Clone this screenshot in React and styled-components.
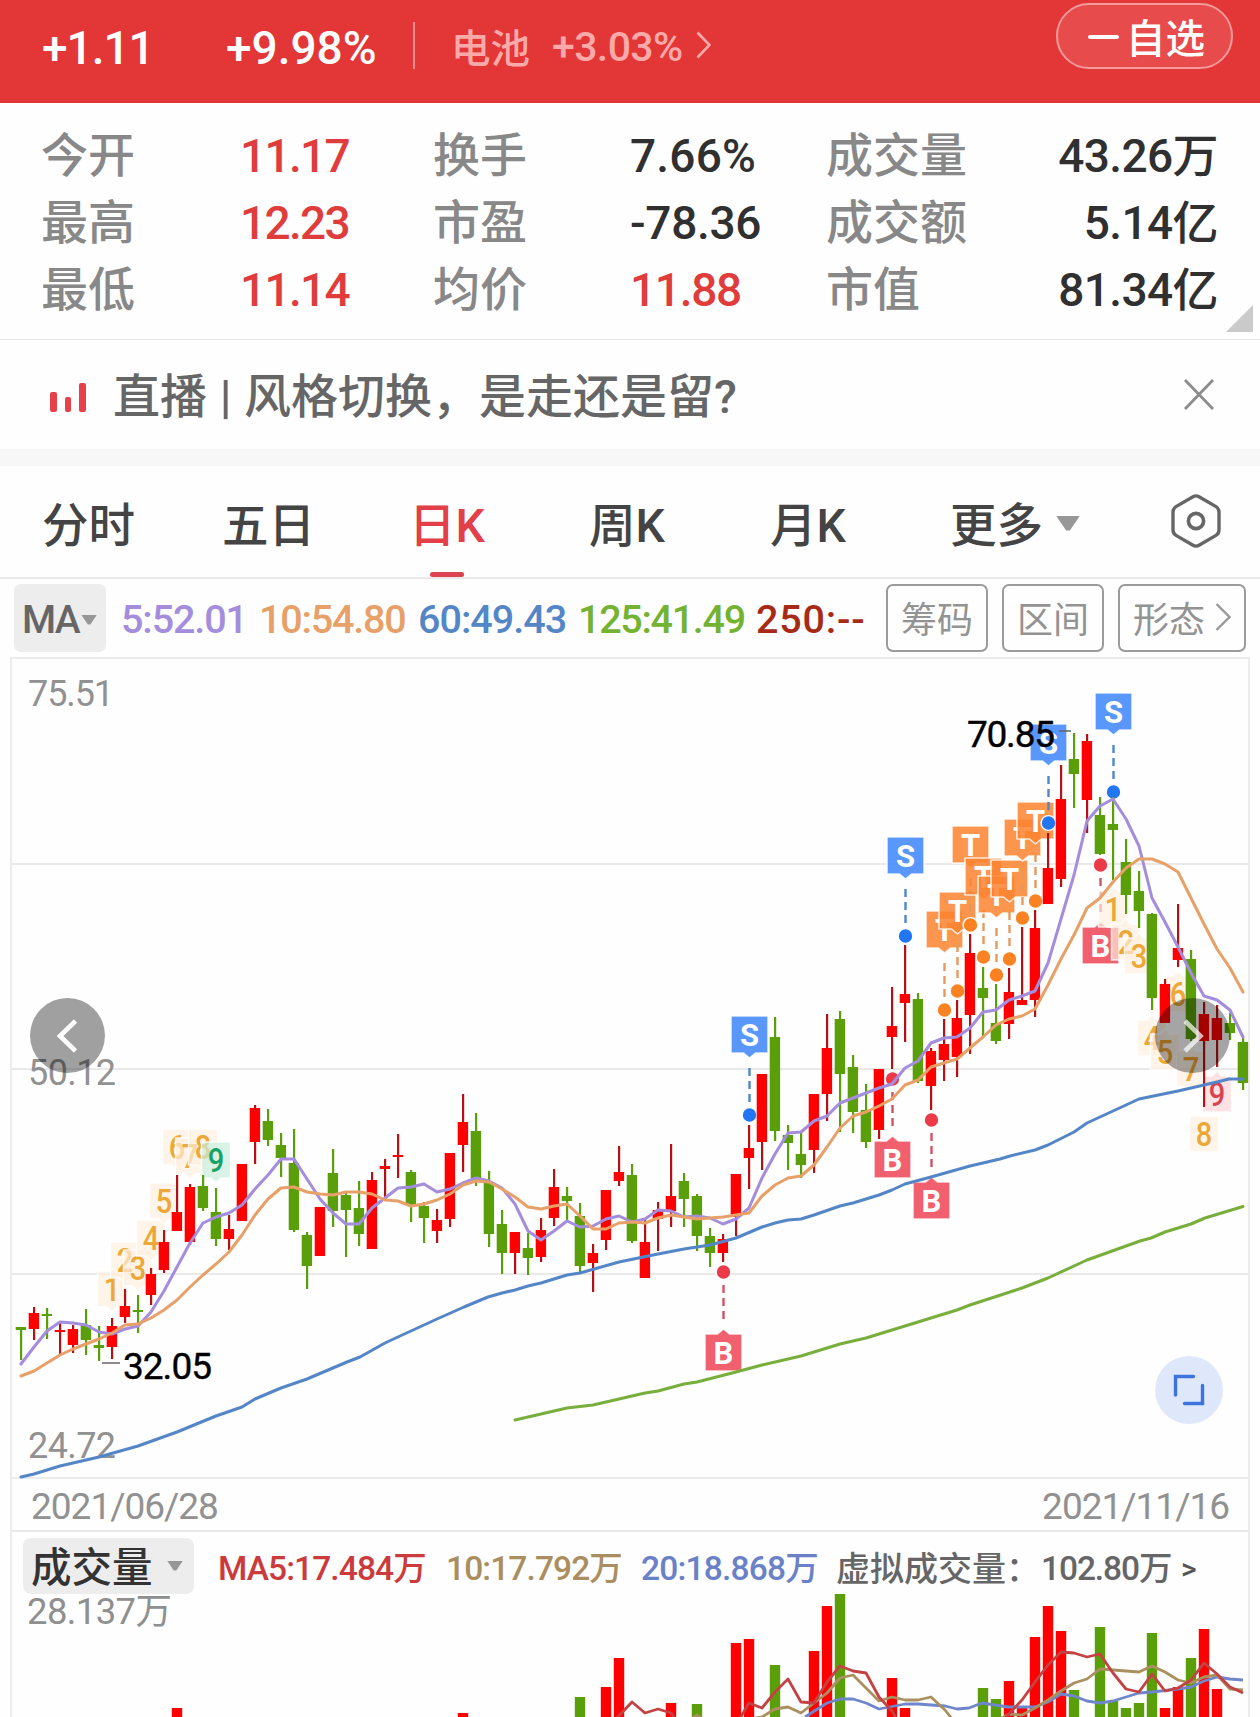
import React from "react";
import styled, { createGlobalStyle } from "styled-components";

const GlobalStyle = createGlobalStyle`
  *, *::before, *::after { box-sizing: border-box; }
  body {
    margin: 0;
    background: #fefefe;
    font-family: Roboto, "Noto Sans CJK SC", sans-serif;
    font-weight: 500;
    overflow: hidden;
  }
`;

const Page = styled.div`
  width: 1260px;
  height: 1717px;
  overflow: hidden;
  display: flex;
  flex-direction: column;
`;

/* ---------- header ---------- */

const Header = styled.header`
  flex: none;
  height: 103px;
  background: #e33637;
  display: flex;
  align-items: flex-start;
  padding: 3px 27px 0 42px;
`;

const Change = styled.span`
  width: ${(p) => p.$width}px;
  height: 90px;
  line-height: 90px;
  font-size: 46px;
  letter-spacing: ${(p) => p.$spacing || 0}px;
  color: #fff;
  white-space: nowrap;
`;

const Divider = styled.span`
  width: 2px;
  height: 47px;
  margin-top: 19px;
  background: #f08b8b;
`;

const Sector = styled.div`
  display: flex;
  align-items: center;
  height: 84px;
  padding-left: 36px;
  color: #fba9a9;
  white-space: nowrap;
`;

const SectorName = styled.span`
  width: 101px;
  font-size: 39.5px;
`;

const SectorChange = styled.span`
  width: 144px;
  padding-top: 4px;
  font-size: 41px;
  letter-spacing: -0.6px;
`;

const WatchButton = styled.button`
  margin-left: auto;
  width: 177px;
  height: 66px;
  padding: 0 0 2px 30px;
  border: 2px solid #f39a9a;
  border-radius: 33px;
  background: #e74b4c;
  display: flex;
  align-items: center;
  gap: 7px;
  color: #fff;
  font: 500 39.5px Roboto, "Noto Sans CJK SC", sans-serif;
`;

const Minus = styled.span`
  width: 31px;
  height: 4px;
  margin-top: 3px;
  border-radius: 2px;
  background: #fff;
`;

/* ---------- quote stats ---------- */

const Stats = styled.section`
  position: relative;
  flex: none;
  height: 237px;
  padding: 19px 42px 0 41px;
  border-bottom: 1px solid #e6e6e6;
  display: grid;
  grid-template-columns: 199px 193px 197px 196px 141px 1fr;
  grid-auto-rows: 67px;
`;

const StatLabel = styled.span`
  line-height: 67px;
  font-size: 47px;
  color: #888;
  white-space: nowrap;
`;

const StatValue = styled.span`
  line-height: 69px;
  font-size: 46px;
  letter-spacing: ${(p) => p.$spacing}px;
  color: ${(p) => (p.$up ? "#e03c3c" : "#303030")};
  text-align: ${(p) => (p.$right ? "right" : "left")};
  white-space: nowrap;
`;

const Corner = styled.span`
  position: absolute;
  right: 7px;
  bottom: 7px;
  width: 27px;
  height: 27px;
  background: #cacaca;
  clip-path: polygon(100% 0, 100% 100%, 0 100%);
`;

/* ---------- news ---------- */

const News = styled.section`
  flex: none;
  height: 109px;
  padding: 0 46px 0 50px;
  display: flex;
  align-items: center;
`;

const NewsBars = styled.span`
  width: 63px;
  height: 29px;
  display: flex;
  align-items: flex-end;
  gap: 8px;
  margin-top: 6px;
`;

const NewsBar = styled.span`
  width: 6.5px;
  height: ${(p) => p.$height}px;
  border-radius: 2px;
  background: #e6404a;
`;

const NewsTitle = styled.span`
  flex: 1;
  font-size: 47px;
  word-spacing: 1px;
  color: #666;
  line-height: 114px;
  height: 109px;
  white-space: nowrap;
`;

const Band = styled.div`
  flex: none;
  height: 17px;
  background: #f7f7f7;
`;

/* ---------- tabs ---------- */

const Tabs = styled.nav`
  flex: none;
  height: 113px;
  padding-left: 42px;
  border-bottom: 2px solid #e8e8e8;
  display: grid;
  grid-template-columns: 180px 187px 180px 181px 180px 221px 50px;
`;

const Tab = styled.span`
  display: flex;
  align-items: center;
  gap: 13px;
  height: 110px;
  position: relative;
  font-size: 46.5px;
  color: ${(p) => (p.$active ? "#e23f48" : "#444")};
  white-space: nowrap;
`;

const Underline = styled.span`
  position: absolute;
  left: 21px;
  bottom: -1px;
  width: 34px;
  height: 5px;
  border-radius: 3px;
  background: #dc434f;
`;

const Caret = styled.span`
  flex: none;
  width: ${(p) => p.$w}px;
  height: ${(p) => p.$h}px;
  margin-top: ${(p) => p.$drop || 0}px;
  background: #979797;
  clip-path: polygon(0 0, 100% 0, 58% 100%, 42% 100%);
`;

/* ---------- moving average row ---------- */

const MaRow = styled.section`
  flex: none;
  height: 78px;
  padding: 0 14px 0 14px;
  display: flex;
  align-items: center;
`;

const MaPicker = styled.span`
  width: 92px;
  height: 68px;
  margin-right: 15px;
  padding: 3px 0 0 8px;
  display: flex;
  align-items: center;
  gap: 2px;
  border-radius: 7px;
  background: #ededed;
  font-size: 39px;
  letter-spacing: -1.6px;
  color: #666;
`;

const MaValue = styled.span`
  width: ${(p) => p.$width}px;
  padding-top: 2px;
  font-size: 39.5px;
  letter-spacing: ${(p) => p.$spacing}px;
  color: ${(p) => p.$color};
  white-space: nowrap;
`;

const ToolButton = styled.button`
  width: ${(p) => p.$width || 102}px;
  height: 68px;
  margin-left: ${(p) => (p.$first ? "auto" : "14px")};
  padding: 0 0 3px;
  display: flex;
  align-items: center;
  justify-content: center;
  gap: 10px;
  border: 2px solid #9b9b9b;
  border-radius: 7px;
  background: transparent;
  color: #939393;
  font: 400 36px Roboto, "Noto Sans CJK SC", sans-serif;
  white-space: nowrap;
`;

/* ---------- charts ---------- */

const Frame = styled.main`
  position: relative;
  flex: none;
  width: 1240px;
  height: 1060px;
  margin-left: 10px;
  border: 2px solid #ececec;
  border-bottom: 0;
`;

const Plot = styled.svg`
  display: block;
  overflow: visible;
  width: 1236px;
  height: ${(p) => p.$height}px;
`;

const RoundButton = styled.button`
  position: absolute;
  left: ${(p) => p.$left}px;
  top: ${(p) => p.$top}px;
  width: ${(p) => p.$size}px;
  height: ${(p) => p.$size}px;
  padding: 0;
  border: 0;
  border-radius: 50%;
  background: ${(p) => p.$bg};
`;

const DateRow = styled.div`
  height: 55px;
  padding: 3px 19px 0 19px;
  border-top: 2px solid #ececec;
  border-bottom: 2px solid #e8e8e8;
  display: flex;
  align-items: center;
  justify-content: space-between;
  font-size: 37px;
  font-weight: 400;
  letter-spacing: -1px;
  color: #919191;
`;

const VolumeHead = styled.div`
  height: 62px;
  padding: 6px 0 0 11px;
  display: flex;
`;

const VolumePicker = styled.span`
  width: 171px;
  height: 56px;
  margin-right: 24px;
  padding: 0 11px 3px 8px;
  display: flex;
  align-items: center;
  justify-content: space-between;
  border-radius: 8px;
  background: #ededed;
  font-size: 40.5px;
  color: #333;
  white-space: nowrap;
`;

const VolumeText = styled.span`
  width: ${(p) => p.$width}px;
  padding-top: 2px;
  line-height: 58px;
  font-size: ${(p) => p.$size || 33.5}px;
  letter-spacing: ${(p) => p.$spacing || 0}px;
  color: ${(p) => p.$color};
  white-space: nowrap;
`;

const RED = "#fe0000";
const GREEN = "#5a9f0a";
const xAt = (i) => 21 + i * 13;

// [direction, high, body top, body bottom, low]
const candles = [
  ["g",1327,1327,1330,1360],["r",1307,1313,1329,1340],["g",1308,1314,1316,1339],["r",1323,1330,1332,1354],
  ["r",1325,1329,1345,1353],["g",1309,1325,1340,1355],["g",1326,1345,1348,1361],["r",1318,1326,1347,1359],
  ["r",1289,1306,1317,1323],["g",1295,1310,1312,1333],["r",1268,1274,1295,1305],["r",1230,1242,1270,1273],
  ["r",1175,1212,1231,1231],["r",1184,1187,1242,1245],["g",1175,1186,1208,1211],["g",1188,1212,1239,1246],
  ["r",1215,1229,1239,1250],["r",1164,1164,1221,1221],["r",1105,1108,1142,1164],["g",1109,1121,1140,1146],
  ["g",1133,1145,1158,1177],["g",1129,1163,1230,1232],["g",1232,1235,1266,1289],["r",1207,1207,1256,1256],
  ["g",1149,1173,1211,1227],["g",1193,1195,1210,1257],["g",1181,1208,1234,1246],["r",1172,1180,1249,1249],
  ["r",1159,1166,1169,1197],["r",1134,1155,1157,1178],["g",1170,1172,1205,1222],["g",1202,1206,1218,1243],
  ["r",1209,1220,1231,1243],["r",1153,1153,1219,1227],["r",1094,1122,1145,1172],["g",1113,1131,1178,1186],
  ["g",1171,1182,1234,1247],["g",1210,1224,1253,1274],["r",1232,1232,1253,1274],["g",1233,1248,1258,1275],
  ["r",1218,1230,1257,1262],["r",1169,1187,1218,1226],["g",1187,1196,1201,1222],["g",1203,1216,1266,1272],
  ["r",1244,1253,1263,1292],["r",1190,1190,1240,1250],["r",1146,1172,1181,1186],["g",1164,1175,1241,1243],
  ["r",1220,1242,1278,1278],["r",1202,1210,1219,1251],["r",1144,1196,1211,1227],["g",1173,1181,1199,1227],
  ["g",1194,1196,1236,1251],["g",1228,1236,1253,1267],["r",1234,1239,1253,1262],["r",1174,1174,1217,1236],
  ["r",1125,1148,1158,1189],["r",1074,1074,1142,1170],["g",1017,1037,1131,1141],["g",1125,1135,1143,1170],
  ["g",1133,1154,1165,1178],["r",1094,1094,1150,1173],["r",1014,1048,1094,1121],["g",1011,1019,1074,1132],
  ["g",1055,1067,1112,1133],["g",1084,1110,1142,1148],["r",1069,1069,1130,1139],["r",987,1026,1037,1069],
  ["r",945,994,1003,1042],["g",993,999,1081,1083],["r",1048,1051,1086,1110],["r",1019,1044,1060,1081],
  ["r",1000,1018,1057,1077],["r",934,953,1015,1054],["g",967,988,998,1037],["g",984,1023,1041,1044],
  ["r",968,992,1024,1039],["r",927,1000,1005,1005],["r",910,928,1000,1017],["r",833,868,904,904],
  ["r",765,799,879,887],["g",733,759,774,808],["r",734,741,800,833],["g",797,815,854,855],
  ["g",797,824,830,880],["g",839,862,895,914],["g",871,891,911,928],["g",913,914,998,1010],
  ["r",979,984,1023,1023],["r",904,948,960,967],["g",950,959,1039,1041],["r",1002,1014,1041,1107],
  ["r",1005,1018,1040,1067],["g",1013,1023,1033,1040],["g",1038,1042,1083,1090],
];

const ma5 = [
  1364,1347,1331,1322,1323,1325,1332,1334,1329,1326,1312,1291,1267,1243,1223,1217,1213,1205,1189,1175,
  1159,1159,1179,1199,1213,1224,1224,1208,1198,1188,1187,1184,1192,1189,1183,1178,1181,1188,1204,1231,
  1240,1231,1221,1227,1226,1219,1216,1222,1219,1210,1211,1217,1216,1218,1224,1219,1208,1178,1154,1133,
  1132,1121,1116,1103,1098,1093,1088,1084,1068,1061,1043,1038,1037,1028,1012,1010,1000,996,991,963,
  919,875,821,806,799,819,846,898,922,947,973,996,1000,1010,1037,
];

const ma10 = [
  1376,1371,1363,1355,1349,1344,1339,1333,1325,1324,1318,1310,1300,1287,1275,1264,1252,1235,1215,1199,
  1188,1187,1192,1194,1195,1192,1192,1194,1200,1201,1206,1204,1200,1194,1185,1181,1182,1189,1197,1207,
  1209,1206,1204,1216,1229,1229,1223,1222,1223,1218,1215,1217,1219,1218,1217,1215,1213,1196,1185,1178,
  1176,1165,1147,1128,1116,1112,1106,1099,1085,1080,1067,1063,1059,1048,1037,1025,1019,1016,1009,985,
  959,935,908,898,882,868,859,859,864,872,898,924,949,968,992,
];

const ma60 =
  "21,1477 34,1474 47,1470 60,1466 99,1457 138,1446 177,1432 216,1416 242,1407 255,1399 281,1388 307,1379 347,1362 360,1357 385,1343 400,1336 424,1325 437,1319 464,1307 488,1297 502,1293 515,1290 528,1286 541,1283 567,1275 580,1273 619,1262 658,1254 684,1249 710,1245 736,1238 762,1227 775,1223 788,1220 801,1219 814,1215 840,1206 853,1203 879,1195 892,1190 905,1184 931,1177 970,1166 1000,1159 1010,1156 1035,1150 1048,1145 1074,1132 1087,1123 1113,1111 1139,1099 1178,1091 1217,1082 1229,1079 1243,1079";

const ma125 =
  "515,1420 528,1417 541,1414 567,1408 593,1405 645,1393 658,1391 684,1384 697,1382 736,1372 762,1365 801,1356 840,1344 866,1338 957,1310 970,1305 1022,1288 1048,1278 1087,1260 1140,1241 1151,1238 1165,1232 1191,1224 1205,1218 1243,1206.5";

const toPoints = (values) => values.map((y, i) => `${xAt(i)},${y}`).join(" ");

const kinds = {
  S: { fill: "#3e86fb", dot: "#2176f3", line: "#4f87c9" },
  T: { fill: "#fb8330", dot: "#fa8223", line: "#e59a5d" },
  B: { fill: "#ef4656", dot: "#ec3b48", line: "#cf5361" },
};

const markers = [
  ["B", 54, 1272],["S", 56, 1115],["B", 67, 1079],["S", 68, 936],["B", 70, 1120],
  ["T", 71, 1010],["T", 72, 991],["T", 73, 925],["T", 74, 957],["T", 75, 975],
  ["T", 76, 959],["T", 77, 918],["T", 78, 901],["S", 79, 823],["B", 83, 865],["S", 84, 792],
];

function Marker({ kind, index, y }) {
  const c = kinds[kind];
  const x = xAt(index) + 0.5;
  const dir = kind === "B" ? 1 : -1;
  const near = y + dir * 62;
  const far = y + dir * 99;
  return (
    <g>
      <path d={`M${x} ${y + dir * 13}V${y + dir * 51}`} stroke={c.line} strokeWidth="2.4" strokeDasharray="8 5" />
      <path
        d={`M${x - 18.5} ${near}H${x - 6}L${x} ${near - dir * 5}L${x + 6} ${near}H${x + 18.5}V${far}H${x - 18.5}Z`}
        fill={c.fill}
        fillOpacity="0.86"
        stroke="#fff"
        strokeOpacity="0.8"
        strokeWidth="1.6"
        strokeLinejoin="round"
      />
      <text x={x} y={(near + far) / 2 + 11} textAnchor="middle" fontSize="31" fontWeight="700" fill="#fff">
        {kind}
      </text>
      <circle cx={x} cy={y} r="7.4" fill={c.dot} stroke="#fff" strokeWidth="1.4" />
    </g>
  );
}

// [digit, candle index, centre y, pointer direction, tone]
const counts = [
  ["1", 7, 1289, 1],["2", 8, 1260, 1],["3", 9, 1268, 1],["4", 10, 1238, 1],["5", 11, 1201, 1],
  ["6", 12, 1147, 1],["7", 13, 1156, 1],["8", 14, 1147, 1],["9", 15, 1160, 1, "green"],
  ["1", 84, 909, -1],["2", 85, 942, -1],["3", 86, 956, -1],["4", 87, 1038, -1],["5", 88, 1052, -1],
  ["6", 89, 994, -1],["7", 90, 1069, -1],["8", 91, 1134, 0],["9", 92, 1094, -1, "pink"],
];

const tones = {
  plain: ["#fdefdf", "#eda737"],
  green: ["#c8eddc", "#17a268"],
  pink: ["#fbd3d9", "#d9414f"],
};

function Count({ digit, index, y, point, tone = "plain" }) {
  const x = xAt(index);
  const [bg, fg] = tones[tone];
  const down = point > 0 ? `L${x + 5} ${y + 18}L${x} ${y + 23}L${x - 5} ${y + 18}` : "";
  const up = point < 0 ? `L${x - 5} ${y - 18}L${x} ${y - 23}L${x + 5} ${y - 18}` : "";
  return (
    <g>
      <path
        d={`M${x - 14.5} ${y - 18}${up}L${x + 14.5} ${y - 18}V${y + 18}${down}L${x - 14.5} ${y + 18}Z`}
        fill={bg}
        fillOpacity="0.68"
        stroke="#fff"
        strokeOpacity="0.8"
        strokeWidth="1.5"
      />
      <text x={x} y={y + 12} textAnchor="middle" fontSize="34" fill={fg} textLength="16.5" lengthAdjust="spacingAndGlyphs">
        {digit}
      </text>
    </g>
  );
}

function PricePlot() {
  return (
    <Plot viewBox="12 659 1236 818" $height={818}>
      {[864, 1069, 1274].map((y) => (
        <path key={y} d={`M12 ${y}H1248`} stroke="#e9e9e9" strokeWidth="2" />
      ))}
      <g fontSize="36" fontWeight="400" fill="#919191">
        <text x="28" y="705.5" textLength="86">75.51</text>
        <text x="28" y="1085" textLength="88">50.12</text>
        <text x="28" y="1457.5" textLength="88">24.72</text>
      </g>
      {markers.map(([kind, index, y]) => (
        <Marker key={index} kind={kind} index={index} y={y} />
      ))}
      {counts.map(([digit, index, y, point, tone]) => (
        <Count key={index} digit={digit} index={index} y={y} point={point} tone={tone} />
      ))}
      {candles.map(([dir, high, top, bottom, low], i) => (
        <g key={i} fill={dir === "r" ? RED : GREEN}>
          <rect x={xAt(i) - 1} y={high} width="2.2" height={low - high} fill={dir === "r" ? "#b41116" : GREEN} />
          <rect x={xAt(i) - 5.3} y={top} width="10.4" height={bottom - top} />
        </g>
      ))}
      <g fill="none" strokeWidth="3" strokeLinejoin="round" strokeLinecap="round">
        <polyline points={toPoints(ma5)} stroke="#a48ddc" />
        <polyline points={toPoints(ma10)} stroke="#e8a069" />
        <polyline points={ma60} stroke="#5486c7" />
        <polyline points={ma125} stroke="#77ae3c" />
      </g>
      <path d="M102 1363H120M1059 731H1071" stroke="#666" strokeWidth="1.4" />
      <g fontSize="37" fontWeight="400" fill="#000" stroke="#000" strokeWidth="0.4">
        <text x="123" y="1379" textLength="89">32.05</text>
        <text x="967" y="747" textLength="88">70.85</text>
      </g>
    </Plot>
  );
}

// [direction, candle index, top y]
const volumes = [
  ["r",12,1708],["r",34,1713],["g",43,1697],["r",45,1687],["r",46,1658],["r",50,1703],["g",52,1704],
  ["r",55,1643],["r",56,1639],["g",58,1665],["r",61,1651],["r",62,1606],["g",63,1594],["r",67,1678],
  ["r",68,1708],["g",74,1688],["g",75,1699],["r",76,1681],["r",77,1708],["r",78,1637],["r",79,1606],
  ["r",80,1631],["g",81,1690],["g",83,1627],["g",84,1701],["g",85,1708],["g",86,1703],["g",87,1633],
  ["r",88,1708],["r",89,1687],["g",90,1658],["r",91,1629],["r",92,1689],
];

const volumeLines = [
  ["#6f86cc", "805,1717 827,1703 840,1699 853,1699 866,1703 879,1709 905,1704 918,1704 945,1706 957,1709 969,1708 982,1703 1008,1707 1035,1707 1048,1702 1061,1694 1074,1696 1087,1701 1100,1703 1113,1701 1139,1693 1152,1692 1178,1689 1191,1687 1204,1681 1217,1677 1230,1679 1243,1680"],
  ["#ab905f", "690,1720 697,1715 704,1720 744,1720 762,1717 775,1709 788,1707 801,1713 814,1703 827,1693 840,1678 853,1675 866,1688 879,1701 892,1697 905,1700 918,1700 931,1697 945,1710 953,1720"],
  ["#ab905f", "1000,1719 1009,1714 1022,1715 1035,1708 1048,1700 1061,1691 1074,1683 1087,1679 1100,1669 1126,1671 1139,1672 1152,1666 1165,1672 1178,1680 1191,1683 1204,1677 1217,1675 1230,1689 1243,1690"],
  ["#c44244", "615,1720 632,1702 645,1713 658,1709 671,1713 676,1720"],
  ["#c44244", "739,1720 749,1703 762,1708 775,1692 788,1679 801,1702 814,1703 827,1682 840,1666 853,1671 866,1673 879,1697 892,1711 897,1720"],
  ["#c44244", "1004,1719 1022,1700 1035,1682 1048,1665 1061,1652 1074,1653 1087,1657 1100,1654 1113,1673 1126,1689 1139,1692 1152,1674 1165,1691 1178,1688 1191,1680 1204,1663 1217,1674 1230,1687 1243,1693"],
];

function VolumePlot() {
  return (
    <Plot viewBox="12 1594 1236 123" $height={123}>
      <text x="27" y="1624" fontSize="36.5" fontWeight="400" fill="#8f8f8f" textLength="145">28.137万</text>
      {volumes.map(([dir, i, y]) => (
        <rect key={i} x={xAt(i) - 5.2} y={y} width="10.4" height={1720 - y} fill={dir === "r" ? RED : GREEN} />
      ))}
      {volumeLines.map(([color, points], i) => (
        <polyline key={i} points={points} fill="none" stroke={color} strokeWidth="2.8" strokeLinejoin="round" />
      ))}
    </Plot>
  );
}

// label, value, rising, letter spacing of the value
const stats = [
  [["今开", "11.17", true, -1.7], ["换手", "7.66%", false, 0.2], ["成交量", "43.26万", false, -0.6]],
  [["最高", "12.23", true, -1.7], ["市盈", "-78.36", false, -0.3], ["成交额", "5.14亿", false, -0.6]],
  [["最低", "11.14", true, -1.7], ["均价", "11.88", true, -1.3], ["市值", "81.34亿", false, -0.6]],
];

const averages = [
  ["5:52.01", "#a48ddc", 138, -1.1],
  ["10:54.80", "#e8a069", 159, -1.2],
  ["60:49.43", "#5486c7", 160, -1],
  ["125:41.49", "#74b232", 178, -1.3],
  ["250:--", "#a72a17", 110, 0.8],
];

export default function App() {
  return (
    <Page>
      <GlobalStyle />
      <Header>
        <Change $width={184} $spacing={-1}>+1.11</Change>
        <Change $width={187}>+9.98%</Change>
        <Divider />
        <Sector>
          <SectorName>电池</SectorName>
          <SectorChange>+3.03%</SectorChange>
          <svg width="15" height="28" viewBox="0 0 15 28">
            <path d="M1.5 1.5L13.5 14L1.5 26.5" fill="none" stroke="#fba9a9" strokeWidth="2.6" />
          </svg>
        </Sector>
        <WatchButton>
          <Minus />
          自选
        </WatchButton>
      </Header>

      <Stats>
        {stats.map((row) =>
          row.map(([label, value, up, spacing], column) => (
            <React.Fragment key={label}>
              <StatLabel>{label}</StatLabel>
              <StatValue $up={up} $spacing={spacing} $right={column === 2}>
                {value}
              </StatValue>
            </React.Fragment>
          ))
        )}
        <Corner />
      </Stats>

      <News>
        <NewsBars>
          <NewsBar $height={20} />
          <NewsBar $height={15} />
          <NewsBar $height={29} />
        </NewsBars>
        <NewsTitle>直播 | 风格切换，是走还是留?</NewsTitle>
        <svg width="30" height="31" viewBox="0 0 30 31">
          <path d="M1 1L29 30M29 1L1 30" stroke="#8c8c8c" strokeWidth="2.8" />
        </svg>
      </News>
      <Band />

      <Tabs>
        <Tab>分时</Tab>
        <Tab>五日</Tab>
        <Tab $active>
          日K
          <Underline />
        </Tab>
        <Tab>周K</Tab>
        <Tab>月K</Tab>
        <Tab>
          更多
          <Caret $w={24} $h={15} $drop={4} />
        </Tab>
        <Tab>
          <svg width="50" height="54" viewBox="0 0 50 54">
            <path
              d="M22 2.8Q25 1 28 2.8L45 12.6Q48 14.4 48 18V36Q48 39.6 45 41.4L28 51.2Q25 53 22 51.2L5 41.4Q2 39.6 2 36V18Q2 14.4 5 12.6Z"
              fill="none"
              stroke="#666"
              strokeWidth="3.4"
            />
            <circle cx="25" cy="27" r="7.6" fill="none" stroke="#666" strokeWidth="3.6" />
          </svg>
        </Tab>
      </Tabs>

      <MaRow>
        <MaPicker>
          MA
          <Caret $w={16} $h={10} />
        </MaPicker>
        {averages.map(([text, color, width, spacing]) => (
          <MaValue key={text} $color={color} $width={width} $spacing={spacing}>
            {text}
          </MaValue>
        ))}
        <ToolButton $first>筹码</ToolButton>
        <ToolButton>区间</ToolButton>
        <ToolButton $width={128}>
          形态
          <svg width="16" height="30" viewBox="0 0 16 30">
            <path d="M1.5 2L14.5 15L1.5 28" fill="none" stroke="#999" strokeWidth="2.4" />
          </svg>
        </ToolButton>
      </MaRow>

      <Frame>
        <PricePlot />
        <RoundButton $left={18} $top={339} $size={75} $bg="rgba(0,0,0,0.37)">
          <svg width="75" height="75" viewBox="0 0 75 75">
            <path d="M45.5 23L30 38L45.5 53" fill="none" stroke="#fff" strokeWidth="4.6" />
          </svg>
        </RoundButton>
        <RoundButton $left={1143} $top={339} $size={75} $bg="rgba(0,0,0,0.35)">
          <svg width="75" height="75" viewBox="0 0 75 75">
            <path d="M30 23L45.5 38L30 53" fill="none" stroke="#fff" strokeOpacity="0.7" strokeWidth="4.6" />
          </svg>
        </RoundButton>
        <RoundButton $left={1143} $top={697} $size={68} $bg="#dfe8fb">
          <svg width="68" height="68" viewBox="0 0 68 68">
            <path d="M38.5 20.5H20.5V39M47.5 29.5V47.5H29.5" fill="none" stroke="#3b74dc" strokeWidth="3.4" strokeLinecap="round" />
          </svg>
        </RoundButton>
        <DateRow>
          <span>2021/06/28</span>
          <span>2021/11/16</span>
        </DateRow>
        <VolumeHead>
          <VolumePicker>
            成交量
            <Caret $w={16} $h={10} $drop={2} />
          </VolumePicker>
          <VolumeText $width={228} $spacing={-0.9} $color="#cb3b3c">MA5:17.484万</VolumeText>
          <VolumeText $width={195} $spacing={-0.9} $color="#ab8e60">10:17.792万</VolumeText>
          <VolumeText $width={195} $spacing={-0.8} $color="#6a81c8">20:18.868万</VolumeText>
          <VolumeText $width={205} $color="#666" $size={34}>虚拟成交量：</VolumeText>
          <VolumeText $width={140} $spacing={-1.1} $color="#666">102.80万</VolumeText>
          <VolumeText $width={20} $color="#555" $size={30}>&gt;</VolumeText>
        </VolumeHead>
        <VolumePlot />
      </Frame>
    </Page>
  );
}
